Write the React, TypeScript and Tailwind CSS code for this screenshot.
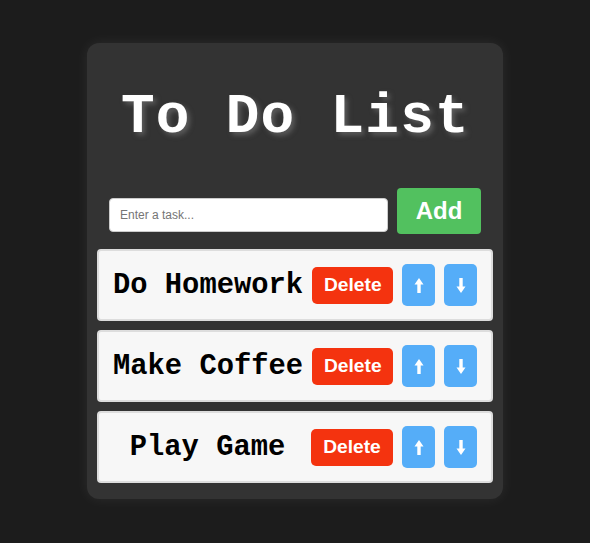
import React from "react";

const Arrow = ({ down = false }: { down?: boolean }) => (
  <svg width="10" height="15" viewBox="0 0 10 15" className={down ? "rotate-180" : ""}>
    <path d="M5 0 L9.5 6.5 L6.7 6.5 L6.7 15 L3.3 15 L3.3 6.5 L0.5 6.5 Z" fill="#fff" />
  </svg>
);

const tasks = ["Do Homework", "Make Coffee", "Play Game"];
const mono = '"Liberation Mono", "Courier New", monospace';

export default function App() {
  return (
    <div className="min-h-screen bg-[#1c1c1c] pt-[43px]" style={{ fontFamily: '"Liberation Sans", Arial, sans-serif' }}>
      <div className="mx-auto w-[416px] rounded-[12px] bg-[#333333] px-[10px] pb-[16px] shadow-[0_0_14px_rgba(255,255,255,0.07)]">
        <h1
          className="pt-[43px] pb-[39px] pl-[1px] text-center text-[56px] font-bold leading-[1.133] tracking-[1.3px] text-white [text-shadow:3px_3px_5px_rgba(120,120,120,0.6)]"
          style={{ fontFamily: mono }}
        >
          To Do List
        </h1>
        <div className="mb-[15px] flex items-end justify-center gap-[9px]">
          <input
            type="text"
            placeholder="Enter a task..."
            className="mb-[2px] h-[34px] w-[279px] rounded-[4px] border border-[#cccccc] bg-white px-[10px] text-[12px] text-black outline-none placeholder:text-[#757575]"
          />
          <button className="h-[46px] w-[84px] rounded-[4px] bg-[#52c15f] text-[24px] font-bold text-white">
            Add
          </button>
        </div>
        <div className="flex flex-col gap-[9px]">
          {tasks.map((t) => (
            <div
              key={t}
              className="flex h-[72px] items-center gap-[9px] rounded-[4px] border-2 border-[#dddddd] bg-[#f7f7f7] px-[14px]"
            >
              <span
                className="flex-1 text-center text-[28.8px] font-bold whitespace-nowrap text-black"
                style={{ fontFamily: mono }}
              >
                {t}
              </span>
              <button className="h-[37px] w-[82px] rounded-[5px] bg-[#f4330f] text-[19.2px] font-bold text-white">
                Delete
              </button>
              <button className="flex h-[42px] w-[33px] items-center justify-center rounded-[5px] bg-[#55adf8]">
                <Arrow />
              </button>
              <button className="flex h-[42px] w-[33px] items-center justify-center rounded-[5px] bg-[#55adf8]">
                <Arrow down />
              </button>
            </div>
          ))}
        </div>
      </div>
    </div>
  );
}
